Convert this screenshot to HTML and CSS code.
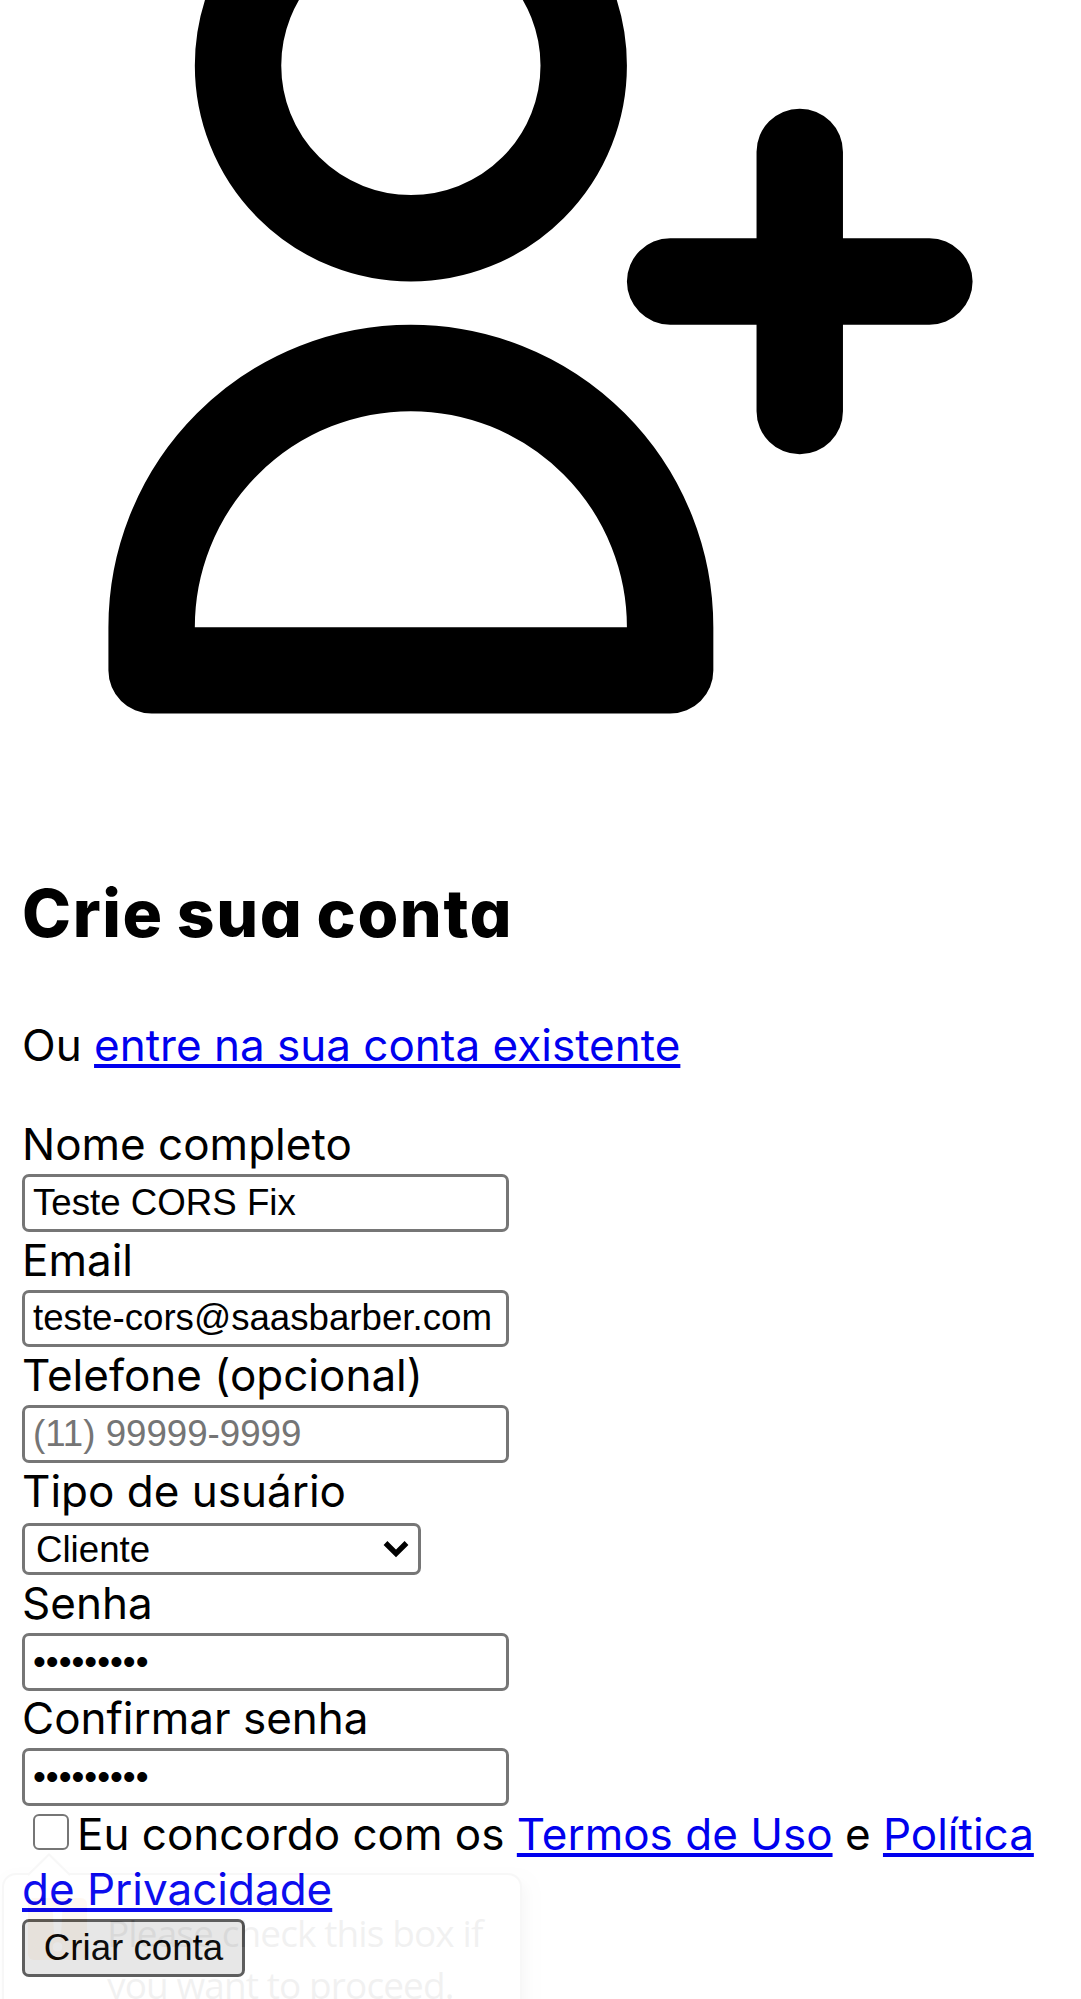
FILE: index.html
```html
<!DOCTYPE html>
<html lang="pt-BR">
<head>
<meta charset="utf-8">
<title>Crie sua conta</title>
<link rel="stylesheet" href="styles.css">
</head>
<body>
<main class="page">
  <svg class="hero-icon" viewBox="0 0 24 24" fill="none" stroke="currentColor" stroke-width="2" stroke-linecap="round" stroke-linejoin="round" aria-hidden="true"><path d="M18 9v3m0 0v3m0-3h3m-3 0h-3m-2-5a4 4 0 11-8 0 4 4 0 018 0zM3 20a6 6 0 0112 0v1H3v-1z"/></svg>
  <h2 class="title">Crie sua conta</h2>
  <p class="lead">Ou <a href="#">entre na sua conta existente</a></p>
  <form class="form">
    <div class="field"><label for="name">Nome completo</label><input class="control" id="name" type="text" value="Teste CORS Fix"></div>
    <div class="field"><label for="email">Email</label><input class="control" id="email" type="email" value="teste-cors@saasbarber.com"></div>
    <div class="field"><label for="phone">Telefone (opcional)</label><input class="control" id="phone" type="tel" placeholder="(11) 99999-9999"></div>
    <div class="field field-select"><label for="role">Tipo de usuário</label>
      <div class="select-box"><select class="select" id="role"><option>Cliente</option></select><svg class="chevron" viewBox="0 0 26 18" aria-hidden="true"><path d="M2.5 3 13 13.5 23.5 3" fill="none" stroke="#000" stroke-width="5.4"/></svg></div>
    </div>
    <div class="field"><label for="pass">Senha</label><input class="control" id="pass" type="password" value="123456789"></div>
    <div class="field"><label for="pass2">Confirmar senha</label><input class="control" id="pass2" type="password" value="123456789"></div>
    <div class="terms"><input class="check" id="terms" type="checkbox"><label for="terms">Eu concordo com os <a href="#">Termos de Uso</a> e <a href="#">Política de Privacidade</a></label></div>
    <button class="submit" type="button">Criar conta</button>
  </form>
</main>
<div class="hint">
  <svg class="hint-arrow" viewBox="0 0 42 23" aria-hidden="true"><path d="M0 22 21 1.5 42 22" fill="#fff" stroke="#777" stroke-width="2"/></svg>
  <span class="hint-icon">!</span>
  <span class="hint-text">Please check this box if<br>you want to proceed.</span>
</div>
</body>
</html>
```
FILE: styles.css
```css
* { box-sizing: border-box; }
html, body { height: 1999px; overflow: hidden; }
body {
  position: relative;
  margin: 0;
  background: #fff;
  color: #000;
  font: 44px/55px Inter, "Liberation Sans", sans-serif;
  font-optical-sizing: none;
}
a { color: #00e; text-decoration: underline; }
.page { padding: 0 22px; }
.hero-icon {
  display: block;
  width: 1037px;
  height: 1037px;
  margin-top: -237.5px;
}
.title {
  margin: 64px 0 0;
  font-size: 66px;
  line-height: 99px;
  font-weight: 800;
  letter-spacing: 1.6px;
  word-spacing: -3px;
  font-feature-settings: "cv11";
}
.lead { margin: 55px 0 44.5px; }
.field { height: 115.5px; }
.field label { display: block; }
.field-select { height: 112.25px; }
.control {
  display: block;
  width: 487px;
  height: 57.75px;
  margin: 2px 0 0;
  padding: 0 8px;
  border: 3px solid #767676;
  border-radius: 7px;
  background: #fff;
  color: #000;
  font: 36.67px "Liberation Sans", sans-serif;
}
.control::placeholder { color: #757575; }
.select-box {
  display: grid;
  width: 399px;
  height: 52px;
  margin-top: 4.5px;
  align-items: center;
}
.select {
  grid-area: 1 / 1;
  width: 100%;
  height: 100%;
  padding: 0 11px;
  appearance: none;
  border: 3px solid #767676;
  border-radius: 7px;
  background: #fff;
  color: #000;
  font: 36.67px "Liberation Sans", sans-serif;
}
.chevron {
  grid-area: 1 / 1;
  justify-self: end;
  width: 26px;
  height: 18px;
  margin-right: 12px;
}
.check {
  appearance: none;
  width: 36px;
  height: 36px;
  margin: 0 8px 0 11px;
  border: 2.5px solid #767676;
  border-radius: 6px;
  background: #fff;
  vertical-align: 0;
}
.submit {
  display: block;
  width: 223px;
  height: 57.75px;
  margin-top: 2.25px;
  padding: 0;
  border: 3px solid #555;
  border-radius: 7px;
  background: #e6e6e6;
  color: #000;
  font: 36.67px "Liberation Sans", sans-serif;
}
/* Validation bubble, caught while fading in over the form */
.hint {
  position: absolute;
  left: 2px;
  top: 1873px;
  display: flex;
  width: 520px;
  height: 200px;
  padding: 23px 24px;
  gap: 20px;
  border: 2px solid #777;
  border-radius: 14px;
  background: #fff;
  box-shadow: 5px 8px 12px rgba(0, 0, 0, .5);
  opacity: .05;
}
.hint-arrow {
  position: absolute;
  left: 24px;
  top: -22px;
  width: 42px;
  height: 23px;
}
.hint-icon {
  flex: none;
  width: 59px;
  height: 62px;
  border-radius: 6px;
  background: #f28c1e;
  color: #fff;
  font: 700 56px/62px "Open Sans", sans-serif;
  text-align: center;
}
.hint-text {
  padding-top: 9px;
  font: 37px/52px "Open Sans", "Noto Sans", sans-serif;
  letter-spacing: -.9px;
  white-space: nowrap;
}
```
